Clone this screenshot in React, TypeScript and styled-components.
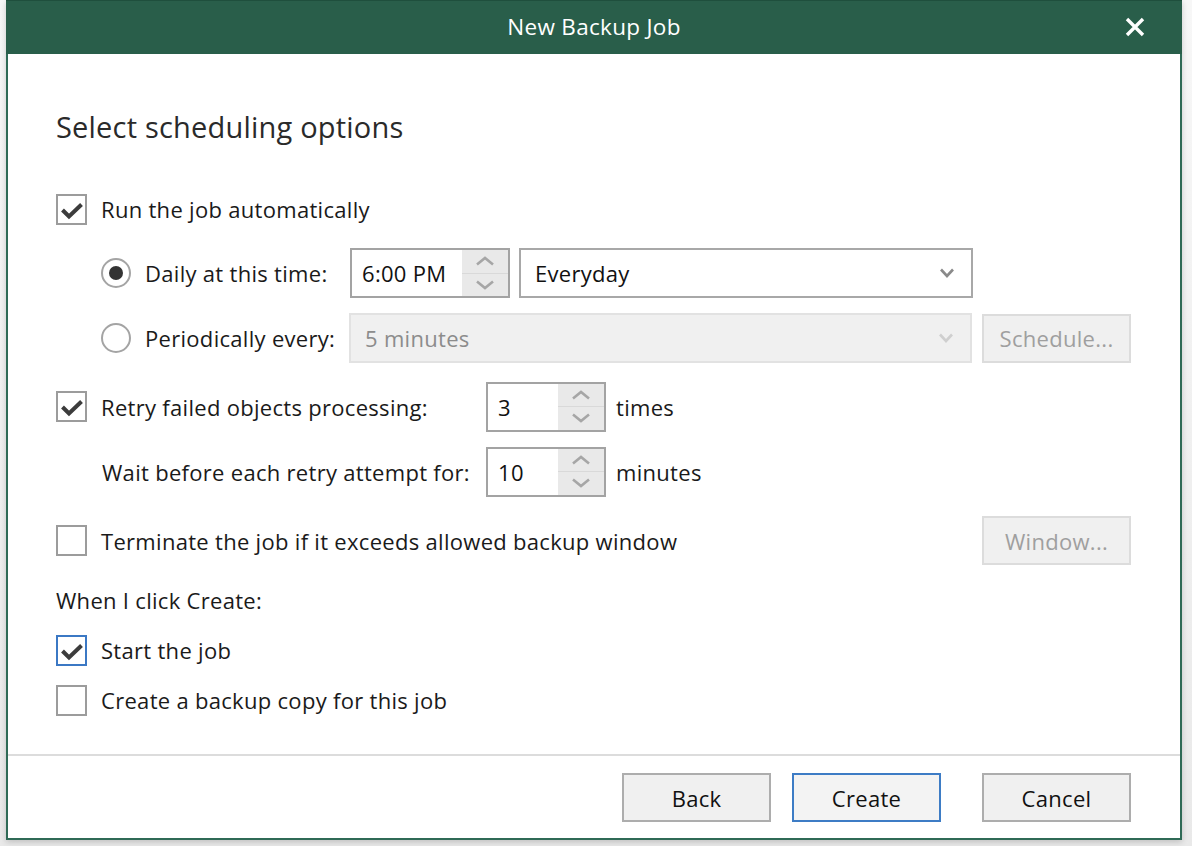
import React from "react";
import styled, { createGlobalStyle } from "styled-components";

const Global = createGlobalStyle`
  html, body { margin: 0; padding: 0; }
  body {
    background: #ececec;
    font-family: "Open Sans", "Noto Sans", "Liberation Sans", sans-serif;
    color: #1a1a1a;
    width: 1192px;
    height: 846px;
    overflow: hidden;
  }
`;

const Page = styled.div`
  width: 1192px;
  height: 846px;
  display: flex;
  padding-left: 6px;
  box-sizing: border-box;
  background: linear-gradient(#f7f7f7, #e9e9e9);
`;

const Dialog = styled.div`
  width: 1176px;
  height: 840px;
  display: flex;
  flex-direction: column;
  box-sizing: border-box;
  background: #ffffff;
  border: 2px solid #2f6a56;
  border-top: none;
  box-shadow: 0 2px 6px rgba(0, 0, 0, 0.18);
`;

const TitleBar = styled.div`
  height: 54px;
  margin: 0 -2px;
  flex: none;
  background: #295e4a;
  border-top: 1px solid #1f4f3d;
  box-sizing: border-box;
  display: grid;
  grid-template-columns: 1fr auto 1fr;
  align-items: center;
  color: #ffffff;
`;

const TitleText = styled.div`
  grid-column: 2;
  font-size: 22.5px;
  letter-spacing: 0.3px;
  margin-top: -2px;
`;

const CloseButton = styled.div`
  grid-column: 3;
  justify-self: end;
  width: 22px;
  height: 22px;
  margin-right: 36px;
  margin-top: -2px;
  display: flex;
  align-items: center;
  justify-content: center;
`;

const Body = styled.div`
  flex: 1;
  display: flex;
  flex-direction: column;
  padding: 53px 49px 0 48px;
`;

const Heading = styled.div`
  height: 40px;
  line-height: 40px;
  font-size: 29px;
  letter-spacing: 0.2px;
  color: #2a2a2a;
`;

const Row = styled.div<{ $top: number; $h: number; $indent?: number }>`
  display: flex;
  align-items: center;
  margin-top: ${(p) => p.$top}px;
  height: ${(p) => p.$h}px;
  padding-left: ${(p) => p.$indent ?? 0}px;
  font-size: 22px;
  letter-spacing: 0.3px;
`;

const Spacer = styled.div`
  flex: 1;
`;

const BoxWrap = styled.div<{ $focus?: boolean }>`
  width: 31px;
  height: 31px;
  box-sizing: border-box;
  border: 2px solid ${(p) => (p.$focus ? "#3b78c4" : "#9c9c9c")};
  background: #ffffff;
  display: flex;
  align-items: center;
  justify-content: center;
  flex: none;
  margin-right: 14px;
`;

const RadioWrap = styled.div`
  width: 30px;
  height: 30px;
  box-sizing: border-box;
  border: 2px solid #a4a4a4;
  border-radius: 50%;
  background: #ffffff;
  display: flex;
  align-items: center;
  justify-content: center;
  flex: none;
  margin-right: 14px;
`;

const RadioDot = styled.div`
  width: 14px;
  height: 14px;
  border-radius: 50%;
  background: #333333;
`;

const Label = styled.span<{ $width?: number }>`
  display: inline-block;
  white-space: nowrap;
  ${(p) => (p.$width ? `width: ${p.$width}px;` : "")}
`;

const Spin = styled.div<{ $w: number }>`
  width: ${(p) => p.$w}px;
  height: 50px;
  box-sizing: border-box;
  border: 2px solid #a3a3a3;
  display: flex;
  flex: none;
  background: #ffffff;
`;

const SpinValue = styled.div`
  flex: 1;
  display: flex;
  align-items: center;
  padding-left: 10px;
  color: #111;
`;

const SpinButtons = styled.div`
  width: 46px;
  display: flex;
  flex-direction: column;
  background: #e9e9e9;
`;

const SpinHalf = styled.div<{ $top?: boolean }>`
  flex: 1;
  display: flex;
  align-items: center;
  justify-content: center;
  ${(p) => (p.$top ? "border-bottom: 1px solid #d9d9d9;" : "")}
`;

const Combo = styled.div<{ $w: number; $disabled?: boolean }>`
  width: ${(p) => p.$w}px;
  height: 50px;
  box-sizing: border-box;
  border: 2px solid ${(p) => (p.$disabled ? "#e2e2e2" : "#a8a8a8")};
  background: ${(p) => (p.$disabled ? "#f0f0f0" : "#ffffff")};
  color: ${(p) => (p.$disabled ? "#8c8c8c" : "#111")};
  display: flex;
  align-items: center;
  padding: 0 16px 0 14px;
  flex: none;
  margin-left: ${(p) => (p.$disabled ? 0 : 9)}px;
`;

const Button = styled.div<{ $disabled?: boolean; $focus?: boolean; $ml?: number }>`
  width: 149px;
  height: 49px;
  box-sizing: border-box;
  display: flex;
  align-items: center;
  justify-content: center;
  flex: none;
  margin-left: ${(p) => p.$ml ?? 0}px;
  background: ${(p) => (p.$disabled ? "#f0f0f0" : p.$focus ? "#f3f3f3" : "#f0f0f0")};
  border: 2px solid
    ${(p) => (p.$disabled ? "#dcdcdc" : p.$focus ? "#3d7cc5" : "#adadad")};
  color: ${(p) => (p.$disabled ? "#9f9f9f" : "#111")};
  font-size: 22px;
  letter-spacing: 0.3px;
`;

const Unit = styled.span`
  margin-left: 10px;
`;

const Separator = styled.div`
  height: 2px;
  background: #dcdcdc;
  margin-top: 38px;
  flex: none;
`;

const Footer = styled.div`
  display: flex;
  justify-content: flex-end;
  padding: 17px 49px 0 0;
`;

const Check = () => (
  <svg width="24" height="18" viewBox="0 0 24 18" style={{ marginTop: 3 }}>
    <polyline
      points="2.5,8 9,14.5 21.5,2.5"
      fill="none"
      stroke="#3c3c3c"
      strokeWidth="4"
      strokeLinecap="butt"
      strokeLinejoin="miter"
    />
  </svg>
);

const Checkbox = ({ checked, focus }: { checked?: boolean; focus?: boolean }) => (
  <BoxWrap $focus={focus}>{checked ? <Check /> : null}</BoxWrap>
);

const Radio = ({ checked }: { checked?: boolean }) => (
  <RadioWrap>{checked ? <RadioDot /> : null}</RadioWrap>
);

const Chevron = ({ up, color, w = 16 }: { up?: boolean; color: string; w?: number }) => (
  <svg width={w} height="10" viewBox={`0 0 ${w} 10`}>
    <polyline
      points={up ? `2,8.5 ${w / 2},2 ${w - 2},8.5` : `2,1.5 ${w / 2},8 ${w - 2},1.5`}
      fill="none"
      stroke={color}
      strokeWidth="2.6"
    />
  </svg>
);

const Spinner = ({ value, width }: { value: string; width: number }) => (
  <Spin $w={width}>
    <SpinValue>{value}</SpinValue>
    <SpinButtons>
      <SpinHalf $top>
        <Chevron up color="#a6a6a6" w={20} />
      </SpinHalf>
      <SpinHalf>
        <Chevron color="#a6a6a6" w={20} />
      </SpinHalf>
    </SpinButtons>
  </Spin>
);

const CloseIcon = () => (
  <svg width="20" height="20" viewBox="0 0 20 20">
    <path d="M2 2 L18 18 M18 2 L2 18" stroke="#ffffff" strokeWidth="3.4" />
  </svg>
);

export default function App() {
  return (
    <>
      <Global />
      <Page>
        <Dialog>
          <TitleBar>
            <TitleText>New Backup Job</TitleText>
            <CloseButton>
              <CloseIcon />
            </CloseButton>
          </TitleBar>
          <Body>
            <Heading>Select scheduling options</Heading>

            <Row $top={46} $h={32}>
              <Checkbox checked />
              <Label>Run the job automatically</Label>
            </Row>

            <Row $top={23} $h={50} $indent={45}>
              <Radio checked />
              <Label $width={205}>Daily at this time:</Label>
              <Spinner value="6:00 PM" width={160} />
              <Combo $w={454}>
                <Label>Everyday</Label>
                <Spacer />
                <Chevron color="#8a8a8a" />
              </Combo>
            </Row>

            <Row $top={15} $h={50} $indent={45}>
              <Radio />
              <Label $width={205}>Periodically every:</Label>
              <Combo $w={623} $disabled>
                <Label>5 minutes</Label>
                <Spacer />
                <Chevron color="#cfcfcf" />
              </Combo>
              <Button $disabled $ml={10}>
                Schedule...
              </Button>
            </Row>

            <Row $top={19} $h={49}>
              <Checkbox checked />
              <Label $width={385}>Retry failed objects processing:</Label>
              <Spinner value="3" width={120} />
              <Unit>times</Unit>
            </Row>

            <Row $top={16} $h={49} $indent={46}>
              <Label $width={384}>Wait before each retry attempt for:</Label>
              <Spinner value="10" width={120} />
              <Unit>minutes</Unit>
            </Row>

            <Row $top={20} $h={49}>
              <Checkbox />
              <Label>Terminate the job if it exceeds allowed backup window</Label>
              <Spacer />
              <Button $disabled>Window...</Button>
            </Row>

            <Row $top={20} $h={30}>
              <Label>When I click Create:</Label>
            </Row>

            <Row $top={19} $h={32}>
              <Checkbox checked focus />
              <Label>Start the job</Label>
            </Row>

            <Row $top={18} $h={32}>
              <Checkbox />
              <Label>Create a backup copy for this job</Label>
            </Row>
          </Body>
          <Separator />
          <Footer>
            <Button>Back</Button>
            <Button $focus $ml={21}>
              Create
            </Button>
            <Button $ml={41}>Cancel</Button>
          </Footer>
          <div style={{ height: 16 }} />
        </Dialog>
      </Page>
    </>
  );
}
